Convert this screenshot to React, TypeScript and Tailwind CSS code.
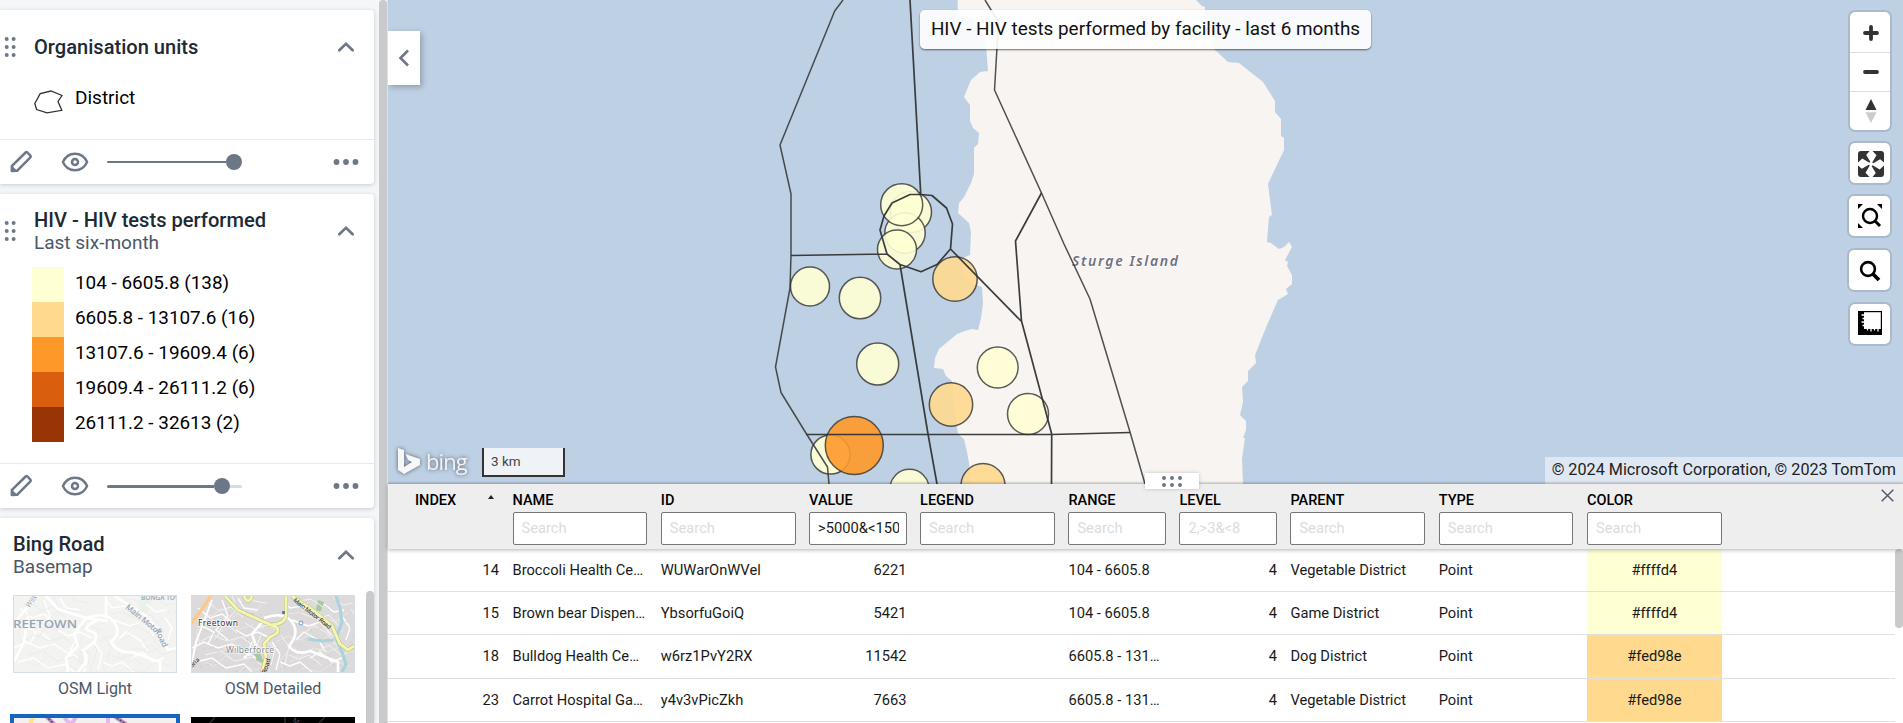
import React from "react";

const legend = [
  { color: "bg-[#ffffd4]", label: "104 - 6605.8 (138)" },
  { color: "bg-[#fed98e]", label: "6605.8 - 13107.6 (16)" },
  { color: "bg-[#fe9929]", label: "13107.6 - 19609.4 (6)" },
  { color: "bg-[#d95f0e]", label: "19609.4 - 26111.2 (6)" },
  { color: "bg-[#993404]", label: "26111.2 - 32613 (2)" },
];

const columns = [
  { label: "NAME", placeholder: "Search" },
  { label: "ID", placeholder: "Search" },
  { label: "VALUE", placeholder: "", value: ">5000&<15000" },
  { label: "LEGEND", placeholder: "Search" },
  { label: "RANGE", placeholder: "Search" },
  { label: "LEVEL", placeholder: "2,>3&<8" },
  { label: "PARENT", placeholder: "Search" },
  { label: "TYPE", placeholder: "Search" },
  { label: "COLOR", placeholder: "Search" },
];

const rows = [
  { index: 14, name: "Broccoli Health Centre", id: "WUWarOnWVel", value: 6221, range: "104 - 6605.8", parent: "Vegetable District", color: "#ffffd4", bg: "bg-[#ffffd4]" },
  { index: 15, name: "Brown bear Dispensary", id: "YbsorfuGoiQ", value: 5421, range: "104 - 6605.8", parent: "Game District", color: "#ffffd4", bg: "bg-[#ffffd4]" },
  { index: 18, name: "Bulldog Health Centre", id: "w6rz1PvY2RX", value: 11542, range: "6605.8 - 13107.6", parent: "Dog District", color: "#fed98e", bg: "bg-[#fed98e]" },
  { index: 23, name: "Carrot Hospital Gardens", id: "y4v3vPicZkh", value: 7663, range: "6605.8 - 13107.6", parent: "Vegetable District", color: "#fed98e", bg: "bg-[#fed98e]" },
];

const gridCols =
  "grid grid-cols-[84px_134.8px_134.8px_97.5px_134.8px_97.5px_97.5px_134.8px_134.8px_134.8px] gap-x-[13.5px] pl-[27px]";

function DragHandle() {
  return (
    <svg width="12" height="22" viewBox="0 0 12 22" fill="#6c7787" className="shrink-0">
      {[3, 11, 19].map((y) => (
        <g key={y}>
          <circle cx="2.7" cy={y} r="2" />
          <circle cx="9.6" cy={y} r="2" />
        </g>
      ))}
    </svg>
  );
}

function ChevronUp() {
  return (
    <svg width="18" height="12" viewBox="0 0 18 12" fill="none" stroke="#6c7787" strokeWidth="2.7" strokeLinecap="round" strokeLinejoin="miter" className="shrink-0">
      <path d="M2.3 9.3 9 2.8l6.7 6.5" />
    </svg>
  );
}

function CardHeader({ title, subtitle, handle }: { title: string; subtitle?: string; handle?: boolean }) {
  return (
    <div className="flex items-center pr-[19px]">
      {handle && (
        <div className="ml-1 w-[30px]">
          <DragHandle />
        </div>
      )}
      <div className={handle ? "flex-1 pt-px" : "flex-1 pt-px pl-[13px]"}>
        <div className="text-[20.100px] leading-[23px] font-medium text-[#212934]">{title}</div>
        {subtitle && <div className="text-[19px] leading-[22px] text-[#4a5768]">{subtitle}</div>}
      </div>
      <ChevronUp />
    </div>
  );
}

function Toolbar({ partial }: { partial?: boolean }) {
  return (
    <div className="flex h-[45px] items-center border-t border-[#e4eaef]">
      <svg width="24" height="24" viewBox="0 0 24 24" className="ml-[9px]">
        <path d="M1.800 14.600v7.400h7.600z" fill="#6c7787" />
        <path d="M3 15.900 16.600 2.500q.9-.8 1.800 0l3 3.100q.8.900 0 1.700L8 20.800l-5 .1z" fill="none" stroke="#6c7787" strokeWidth="2.500" strokeLinejoin="round" />
      </svg>
      <svg width="28" height="20" viewBox="0 0 28 20" className="ml-7" fill="none" stroke="#6c7787" strokeWidth="2.400">
        <path d="M1.900 10C4.500 4.200 9 1.700 14 1.700S23.500 4.200 26.100 10C23.500 15.800 19 18.300 14 18.300S4.500 15.800 1.900 10z" strokeLinejoin="round" />
        <circle cx="14" cy="10" r="3" strokeWidth="2.500" />
      </svg>
      <div className="ml-[18px] flex h-4 w-[135px] items-center">
        {partial ? (
          <>
            <div className="h-[3px] w-[107px] rounded-l bg-[#6c7787]" />
            <div className="size-4 rounded-full bg-[#6c7787]" />
            <div className="h-[3px] w-3 rounded-r bg-[#d5dde5]" />
          </>
        ) : (
          <>
            <div className="h-[2px] w-[119px] rounded-l bg-[#6c7787]" />
            <div className="size-4 rounded-full bg-[#6c7787]" />
          </>
        )}
      </div>
      <svg width="26" height="8" viewBox="0 0 26 8" fill="#6c7787" className="ml-[91px]">
        <circle cx="3.500" cy="4" r="2.900" />
        <circle cx="13" cy="4" r="2.900" />
        <circle cx="22.500" cy="4" r="2.900" />
      </svg>
    </div>
  );
}

const sideStreets =
  "M0 52L12 46 26 52 40 48 58 60M4 66L20 62 34 72 52 68 60 76M6 12L18 22 30 18 42 28M30 4L36 20 24 34 36 44M100 24L116 30 128 26 140 40M104 44L112 36 126 44 134 56M66 52L74 60 70 76M80 46L88 58 84 74M118 62L128 56 140 66 150 62M150 20L158 32 154 44M44 34L54 40 66 36 78 42M10 30L22 36 16 48M92 4L98 12 110 10 122 18M46 2L52 12 66 14M88 66L98 70 108 66 120 76M132 8L142 16 152 14M60 46L56 56 64 62";

function LightMap() {
  return (
    <svg width="162" height="76" viewBox="0 0 162 76" className="block">
      <rect width="162" height="76" fill="#f3f3f1" />
      <path d="M126 0l12 4-6 18-8-6zM66 52l10 4-4 14-9-5z" fill="#edf1ea" />
      <path d={sideStreets} fill="none" stroke="#fff" strokeWidth="1.500" />
      <path d={sideStreets} transform="translate(9 -7)" fill="none" stroke="#e7e9e9" strokeWidth=".7" />
      <path d={sideStreets} transform="translate(162 4) scale(-1 1)" fill="none" stroke="#e9ebeb" strokeWidth=".7" />
      <path d="M0 27L20 4 24 0M32 0L44 13 72 22 94 25M92 0V22M72 22Q92 15 100 26T97 46Q104 58 118 56L146 66V76M84 24Q66 32 76 35T80 46L70 54 72 66 64 76M72 22L60 38 64 50 52 62 54 76M14 20L10 46 0 66M100 0L120 12 132 20 144 34 150 46 154 54 162 52" fill="none" stroke="#fff" strokeWidth="2.600" />
      <g fontFamily="Open Sans, sans-serif" fill="#98a5b2">
        <text x="-1" y="31.500" fontSize="11.500" fontWeight="600" textLength="64" lengthAdjust="spacingAndGlyphs">REETOWN</text>
        <text x="127" y="3.500" fontSize="6.500" fontWeight="600">BONGA TOWN</text>
        <text transform="translate(111 12) rotate(39)" fontSize="8" textLength="43" fontWeight="600">Main Motor</text>
        <text transform="translate(141 34) rotate(66)" fontSize="8" fontWeight="600">Road</text>
        <text transform="translate(15 12) rotate(-50)" fontSize="7">Wilk</text>
      </g>
    </svg>
  );
}

function DetailedMap() {
  return (
    <svg width="162" height="76" viewBox="0 0 162 76" className="block">
      <rect width="162" height="76" fill="#dcdada" />
      <path d="M126 4l6 2-2 10-6-2zM62 58l6-1 4 10-8-2z" fill="#a5c9a5" />
      <path d={sideStreets} fill="none" stroke="#fff" strokeWidth="1.400" />
      <path d={sideStreets} transform="translate(9 -7)" fill="none" stroke="#f4f3f3" strokeWidth="1" />
      <path d={sideStreets} transform="translate(162 4) scale(-1 1)" fill="none" stroke="#eeebea" strokeWidth=".8" />
      <path d={sideStreets} transform="translate(4 5)" fill="none" stroke="#d8b9b4" strokeWidth="1" strokeDasharray="1 7" />
      <path d="M144 0L148 12 150 26 144 42 150 56 154 68 150 76M116 43L130 45 142 44" fill="none" stroke="#aad3df" strokeWidth="3.200" />
      <path d="M-2 28L20 0M20 4L14 20 4 46 0 66" fill="none" stroke="#fff" strokeWidth="2" />
      <path d="M-2 28Q6 20 20-2" fill="none" stroke="#fcc98c" strokeWidth="3.600" />
      <path d="M72 22Q92 15 100 26T97 50Q104 60 118 55L146 66V76M72 24L60 38 64 50 52 62" fill="none" stroke="#fff" strokeWidth="2.600" />
      <path d="M33 0L46 14 72 26 84 31Q90 36 78 41L72 48 74 62 70 76M94 0V20Q92 29 76 29M52 0Q56 10 60 0M100 0L122 15 140 30 148 48 156 54 162 50" fill="none" stroke="#b9bb7e" strokeWidth="4" />
      <path d="M33 0L46 14 72 26 84 31Q90 36 78 41L72 48 74 62 70 76M94 0V20Q92 29 76 29M52 0Q56 10 60 0M100 0L122 15 140 30 148 48 156 54 162 50" fill="none" stroke="#f4f6b0" strokeWidth="3" />
      <circle cx="109" cy="27" r="2" fill="none" stroke="#6ea6d6" />
      <rect x="90" y="15" width="3" height="3" fill="#6a74b8" />
      <g fontFamily="Noto Sans, sans-serif">
        <text x="6" y="30" fontSize="8.500" fill="#333" textLength="40" stroke="#fff" strokeWidth="1.500" paintOrder="stroke">Freetown</text>
        <text x="34" y="57" fontSize="8.500" fill="#888" textLength="48" stroke="#fff" strokeWidth="1.200" paintOrder="stroke">Wilberforce</text>
        <text transform="translate(101 5) rotate(38)" fontSize="6" textLength="46" fill="#222">Main Motor Road</text>
        <text transform="translate(74 78) rotate(-72)" fontSize="6.500" fill="#222">Road</text>
        <text transform="translate(0 72) rotate(-45)" fontSize="6" fill="#222">oria</text>
      </g>
    </svg>
  );
}

function Sidebar() {
  return (
    <aside className="flex h-full w-[388px] shrink-0 bg-[#f4f6f8]">
      <div className="flex w-[379px] flex-col gap-[10px] pt-[10px] pr-[5px]">
        <section className="h-[174px] shrink-0 rounded-r-[4px] bg-white shadow-[0_1px_4px_rgba(64,75,90,0.25)]">
          <div className="h-[129px] pt-[25px]">
            <CardHeader title="Organisation units" handle />
            <div className="mt-[27px] flex items-start pl-[34px]">
              <svg width="29" height="24" viewBox="0 0 29 24" fill="none" stroke="#333" strokeWidth="1.300" className="mt-1">
                <path d="M.8 13.500 6.200 3.600 17 1 28 5.500 24 11.500 27.800 20.300 13 22.800 2.600 19.500z" />
              </svg>
              <span className="ml-3 text-[19px] leading-6 text-black">District</span>
            </div>
          </div>
          <Toolbar />
        </section>

        <section className="h-[314px] shrink-0 rounded-r-[4px] bg-white shadow-[0_1px_4px_rgba(64,75,90,0.25)]">
          <div className="h-[269px] pt-[14px]">
            <CardHeader title="HIV - HIV tests performed" subtitle="Last six-month" handle />
            <div className="mt-[13px] flex flex-col pl-8">
              {legend.map((l) => (
                <div key={l.label} className="flex h-[35px] items-center">
                  <div className={"h-full w-8 " + l.color} />
                  <span className="ml-[11px] pb-[3px] text-[18.900px] leading-6 text-black">{l.label}</span>
                </div>
              ))}
            </div>
          </div>
          <Toolbar partial />
        </section>

        <section className="flex flex-1 overflow-hidden rounded-tr-[4px] bg-white shadow-[0_1px_4px_rgba(64,75,90,0.25)]">
          <div className="relative w-[374px] pt-[14px]">
            <CardHeader title="Bing Road" subtitle="Basemap" />
            <div className="mt-[17px] flex gap-[14px] pl-[13px]">
              <div className="w-[164px]">
                <div className="border border-[#d5dde5]"><LightMap /></div>
                <div className="mt-[5px] text-center text-[16px] leading-[22px] text-[#4a5768]">OSM Light</div>
              </div>
              <div className="w-[164px]">
                <div className="border border-[#d5dde5]"><DetailedMap /></div>
                <div className="mt-[5px] text-center text-[16px] leading-[22px] text-[#4a5768]">OSM Detailed</div>
              </div>
            </div>
            <div className="mt-[14px] flex items-start gap-[11px] pl-[10px]">
              <div className="border-4 border-b-0 border-[#1565c0]">
                <svg width="162" height="20" viewBox="0 0 162 20" className="block">
                  <rect width="162" height="20" fill="#f3f1f0" />
                  <path d="M14 10L20-2" stroke="#fbe48c" strokeWidth="4" />
                  <path d="M32-2L46 12M100-2L122 13" stroke="#b78fc4" strokeWidth="4" />
                  <path d="M32-2L46 12M100-2L122 13" stroke="#5e4a66" strokeWidth="1.500" strokeDasharray="2 1.500" />
                  <path d="M50-2Q57 12 62-2M94-2V12" fill="none" stroke="#e3b8ee" strokeWidth="4" />
                </svg>
              </div>
              <svg width="164" height="20" viewBox="0 0 164 20" className="mt-[3px] block">
                <rect width="164" height="20" fill="#000" />
                <path d="M14 12L24 0M94 0V8M128 6L134 0" stroke="#2b2b2b" strokeWidth="1.500" />
                <text transform="translate(101 4) rotate(36)" fontSize="7" fill="#555" fontFamily="Open Sans, sans-serif">Motor</text>
              </svg>
            </div>
            <div className="absolute top-[73px] right-0 h-52 w-2 rounded-t-full bg-[#c9cacc]" />
          </div>
        </section>
      </div>
      <div className="h-full w-2 rounded-t-full bg-[#c9cacc]" />
      <div className="h-full w-px bg-[#dfe1e3]" />
    </aside>
  );
}

const facilities = [
  [911, 212, 20.500, "#ffffd4"],
  [905, 233, 20.200, "#ffffd4"],
  [901.700, 204.700, 21, "#ffffd4"],
  [897, 249.500, 19.500, "#ffffd4"],
  [810, 286.500, 19.500, "#ffffd4"],
  [860, 298, 20.700, "#ffffd4"],
  [877.700, 364, 21, "#ffffd4"],
  [955, 279, 22.200, "#fed98e"],
  [951, 404.500, 21.700, "#fed98e"],
  [997.700, 367.500, 20.400, "#ffffd4"],
  [1028, 414, 20.500, "#ffffd4"],
  [830.500, 454.500, 19.600, "#ffffd4"],
  [854.300, 445.500, 29, "#fe9929"],
  [909.500, 488.700, 19.500, "#ffffd4"],
  [983, 485.500, 22, "#fed98e"],
] as const;

function MapCanvas() {
  return (
    <svg className="absolute inset-0" width="1515" height="484" viewBox="388 0 1515 484">
      <rect x="388" width="1515" height="484" fill="#bed0e4" />
      <path
        fill="#f7f4f1"
        d="M957.700 0V12L960 16 973 18 981 30 986 45 988 71 980 72 971 80 964 97 970 105 970 121 973 128 979 133 978 144 974 148 974 174 971 183 964 197 959 203 958 213 969 223 971 232 970 255 963 258 963 276 973 284 982 287 983 303 981 318 978 330 972 329 965 331 957 334 939 349 935 358 934 368 943 369 946 376 952 381 954 400 955 415 958 434 964 439 967 452 969 463 971 484H1243L1242 459 1245 438 1243 438 1246 430 1246 421 1240 415 1243 402 1242 387 1248 381 1248 371 1256 363 1255 355 1267 325 1278 300 1288 294 1286 289 1292 284 1292 275 1287 266 1288 262 1285 260 1292 247 1289 242 1284 247 1279 249 1271 243 1267 242 1269 217 1272 215 1268 184 1284 150 1284 138 1281 136 1281 119 1275 112 1275 101 1263 82 1239 63 1228 62 1214 49 1212 30 1205 16 1205 7 1202 6 1196 0z"
      />
      <text x="1072" y="266" fontFamily="Noto Sans, sans-serif" fontStyle="italic" fontWeight="600" fontSize="14" fill="#6f7080" textLength="106" stroke="#fff" strokeWidth="1.500" paintOrder="stroke">
        Sturge Island
      </text>
      {facilities.map(([x, y, r, c]) => (
        <circle key={`${x}-${y}`} cx={x} cy={y} r={r} fill={c} fillOpacity=".9" stroke="#333" strokeOpacity=".8" strokeWidth="1.500" />
      ))}
      <g fill="none" stroke="#333" strokeLinejoin="round">
        <path strokeWidth="1.500" strokeOpacity=".85" d="M843 0L834.700 11 780 145 791 194V255.500L790 288 775.500 367 781 392.500 806.500 434 827.500 467 829 484M985 0L998.500 22 994.500 90 1041.500 193 1064 244 1090 299 1130 432 1145 484" />
        <path strokeWidth="1.700" strokeOpacity=".95" d="M910 0L920.700 193.500M920.700 194.500L910 194.500 892 203 884 216 880 230 887 254 900 264.500 921 271.700 937 264.500 950.500 249 952.500 224 946.500 208 932 195.500 920.700 194.500M791 255.500L887 254M900 264.500L928 434 937 484M950.500 249L1021 321M1041.500 193L1015.500 241 1021.500 321 1051.700 434 1051.500 484M806.500 434.500H1051.700L1130 432.500" />
      </g>
    </svg>
  );
}

const ctrl = "flex items-center justify-center rounded-[5px] bg-white shadow-[0_0_0_2px_rgba(0,0,0,0.1)]";

function MapControls() {
  return (
    <div className="absolute top-3 right-[13px] flex flex-col items-end">
      <div className="flex h-[118px] w-10 flex-col divide-y divide-[#ddd] rounded-[5px] bg-white shadow-[0_0_0_2px_rgba(0,0,0,0.1)]">
        <div className="flex h-[41px] items-center justify-center pt-px pl-px">
          <svg width="18" height="18" viewBox="0 0 18 18" stroke="#333" strokeWidth="3.800" strokeLinecap="round"><path d="M9 3v12M3 9h12" /></svg>
        </div>
        <div className="flex h-[39px] items-center justify-center pl-px">
          <svg width="18" height="18" viewBox="0 0 18 18" stroke="#333" strokeWidth="3.800" strokeLinecap="round"><path d="M3 9h12" /></svg>
        </div>
        <div className="flex h-[38px] items-center justify-center pl-px">
          <svg width="12" height="26" viewBox="0 0 12 26"><path d="M.5 12L6 1l5.500 11z" fill="#333" /><path d="M.5 14.300L6 25l5.500-10.700z" fill="#ccc" /></svg>
        </div>
      </div>
      <div className={ctrl + " mt-[13px] size-10"}>
        <svg width="28" height="28" viewBox="0 0 28 28" fill="#333" className="mt-px ml-[2px]">
          {[0, 90, 180, 270].map((a) => (
            <path key={a} transform={`rotate(${a} 14 14)`} d="M1 4Q1 1 4 1H12.500L9.200 4.900 13.300 11.700 12.400 12.800 5.300 8.500 1 12.500z" />
          ))}
        </svg>
      </div>
      <div className={ctrl + " mt-[13px] h-10 w-[41px]"}>
        <svg width="24" height="24" viewBox="0 0 24 24" fill="#000">
          <path d="M0 0h5L0 5zM19 0h5v5zM0 19v5h5z" />
          <circle cx="12" cy="12" r="7" fill="none" stroke="#000" strokeWidth="2.400" />
          <path d="M16.500 16.500L22 22" stroke="#000" strokeWidth="3" />
        </svg>
      </div>
      <div className={ctrl + " mt-[14px] h-10 w-[41px]"}>
        <svg width="22" height="22" viewBox="0 0 22 22" fill="none" stroke="#000" className="mt-px ml-px">
          <circle cx="9" cy="9" r="6.900" strokeWidth="2.600" />
          <path d="M13.500 13.500L20 20" strokeWidth="3.800" />
        </svg>
      </div>
      <div className={ctrl + " mt-[14px] size-10"}>
        <svg width="24" height="24" viewBox="0 0 24 24" className="mb-[2px]">
          <path d="M0 0H24V24H0z" fill="#000" />
          <path d="M6 1.200H22.800V18H6z" fill="#fff" />
          <path d="M3.500 4H6M4.500 7.500H6M3.500 11H6M4.500 14.500H6M9.500 18v1.500M13 18v2.500M16.500 18v1.500M20 18v2.500" stroke="#fff" strokeWidth="1.300" />
        </svg>
      </div>
    </div>
  );
}

function DataTable() {
  return (
    <section className="relative h-[239px] bg-white text-[14.700px] text-[#1a1a1a]">
      <div className="relative z-10 h-[65px] bg-[#eee] shadow-[0_1px_4px_rgba(0,0,0,0.3)]">
        <div className={gridCols}>
          <div className="relative pt-2 text-[14.500px] leading-[17px] font-medium text-black">
            INDEX
            <div className="absolute top-[11px] left-[73px] border-x-[3.500px] border-b-4 border-x-transparent border-b-[#222]" />
          </div>
          {columns.map((c) => (
            <div key={c.label} className="min-w-0 pt-2">
              <div className="text-[14.500px] leading-[17px] font-medium text-black">{c.label}</div>
              <div className="mt-[3px] flex h-[33px] items-center overflow-hidden rounded-[2px] border border-[#767676] bg-white pr-[7px] pl-2 whitespace-nowrap">
                <span className={c.value ? "w-full overflow-hidden" : "text-[#dcdcdc]"}>{c.value || c.placeholder}</span>
              </div>
            </div>
          ))}
        </div>
        <svg className="absolute top-[5px] right-[9px]" width="13" height="13" viewBox="0 0 13 13" stroke="#4a5768" strokeWidth="1.400">
          <path d="M.7.700l11.600 11.600M12.300.700L.700 12.300" />
        </svg>
      </div>
      <div className="flex h-[174px] overflow-hidden">
        <div className="w-[1507px]">
          {rows.map((r) => (
            <div key={r.index} className={gridCols + " h-[43.200px] items-center border-b border-[#e0e0e0] whitespace-nowrap"}>
              <div className="text-right">{r.index}</div>
              <div className="truncate pr-[2px]">{r.name}</div>
              <div>{r.id}</div>
              <div className="text-right">{r.value}</div>
              <div />
              <div className="truncate">{r.range}</div>
              <div className="text-right">4</div>
              <div>{r.parent}</div>
              <div>Point</div>
              <div className={"flex h-full items-center justify-center " + r.bg}>{r.color}</div>
            </div>
          ))}
        </div>
        <div className="h-[79px] w-2 rounded-full bg-[#c9cacc]" />
      </div>
    </section>
  );
}

export default function App() {
  return (
    <div className="flex h-[723px] w-[1903px] overflow-hidden bg-white font-['Roboto',sans-serif]">
      <Sidebar />
      <main className="flex w-[1515px] flex-col">
        <div className="relative h-[484px] overflow-hidden">
          <MapCanvas />
          <button className="absolute top-[31px] left-0 flex h-[54px] w-8 items-center justify-center bg-white pr-px shadow-[2px_2px_6px_rgba(0,0,0,0.25)]">
            <svg width="12" height="18" viewBox="0 0 12 18" fill="none" stroke="#6c7787" strokeWidth="2.600"><path d="M10 1.500L2.500 9l7.500 7.500" /></svg>
          </button>
          <div className="absolute top-[10px] left-[532px] h-[39px] w-[451px] rounded-[5px] bg-white/90 text-center text-[18.900px] leading-[37px] whitespace-nowrap text-[#111] shadow-[0_1px_2px_rgba(0,0,0,0.55)]">
            HIV - HIV tests performed by facility - last 6 months
          </div>
          <MapControls />
          <div className="absolute bottom-[10px] left-[10px] flex items-center gap-[6px] drop-shadow-[0_0_2px_rgba(70,80,95,0.9)]">
            <svg width="22" height="26" viewBox="0 0 22 26" fill="#f7f7f7">
              <path d="M0 0l6 2v17l8-5-4-2-2.500-6L22 11v6L6 26l-6-4z" />
            </svg>
            <span className="font-['Open_Sans',sans-serif] text-[22px] leading-[26px] tracking-[-0.9px] text-[#f2f2f2]">bing</span>
          </div>
          <div className="absolute top-[448px] left-[94px] h-[29px] w-[83px] border-2 border-t-0 border-[#333] bg-white/75 pl-[7px] text-[13.500px] leading-[27px] text-[#444]">3 km</div>
          <div className="absolute right-0 bottom-0 h-[27px] w-[358px] bg-white/50 pr-[7px] text-right text-[16.200px] leading-[25px] whitespace-nowrap text-[#222]">
            © 2024 Microsoft Corporation, © 2023 TomTom
          </div>
          <div className="absolute inset-x-0 bottom-0 h-[3px] bg-linear-to-t from-black/15 to-transparent" />
        </div>
        <div className="relative">
          <DataTable />
          <div className="absolute top-[-11px] left-[757px] z-20 flex h-4 w-[54px] items-center justify-center bg-white shadow-[0_0_4px_rgba(0,0,0,0.2)]">
            <svg width="20" height="11" viewBox="0 0 20 11" fill="#6c7787">
              {[2, 10, 18].map((x) => (
                <g key={x}>
                  <circle cx={x} cy="2.100" r="2" />
                  <circle cx={x} cy="8.900" r="2" />
                </g>
              ))}
            </svg>
          </div>
        </div>
      </main>
    </div>
  );
}
